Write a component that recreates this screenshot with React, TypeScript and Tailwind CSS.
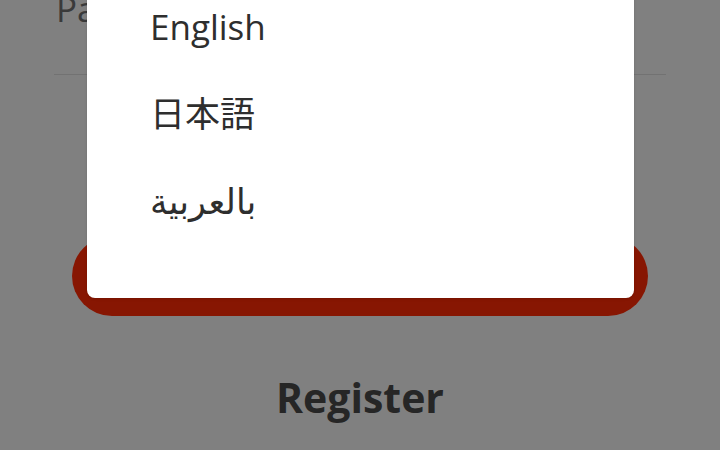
import React from "react";

const font = { fontFamily: '"Open Sans", "Noto Sans CJK JP", "DejaVu Sans", sans-serif' };

export default function App() {
  const langs = ["English", "日本語", "بالعربية"];
  return (
    <div
      className="relative w-[720px] h-[450px] overflow-hidden bg-[#808080]"
      style={font}
    >
      <div className="flex flex-col items-center">
        <div className="w-[612px] mt-[-13px] pb-[43px] border-b border-[#727272]">
          <div className="text-[35px] leading-[44px] text-[#3a3a3a] pl-[2px]">Password</div>
        </div>
        <div className="mt-[161px] w-[576px] h-[80px] rounded-full bg-[#871602]" />
        <div className="mt-[53px] text-[41px] leading-[56px] font-bold text-[#262626]">
          Register
        </div>
      </div>

      <div className="absolute left-[87px] top-[-17px] w-[547px] h-[315px] bg-white rounded-b-lg shadow-sm">
        {langs.map((l) => (
          <div
            key={l}
            className="pl-[63px] text-[35px] leading-[87px] text-[#2e2e2e]"
          >
            {l}
          </div>
        ))}
      </div>
    </div>
  );
}
